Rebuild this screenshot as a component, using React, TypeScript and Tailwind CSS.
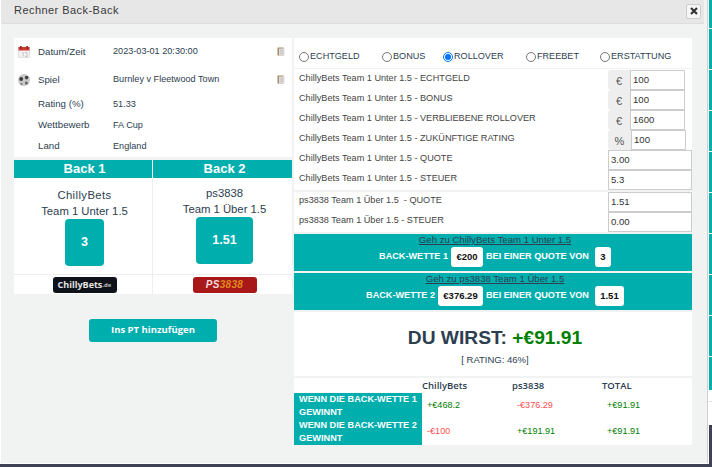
import React from "react";

const Clip = () => (
  <svg width="8" height="9" viewBox="0 0 8 9" className="shrink-0">
    <rect x="0.5" y="0.5" width="6" height="8" fill="#a98a6a" />
    <rect x="2" y="1.5" width="5.5" height="7" fill="#dcdcdc" />
    <path d="M3 3.5h3.5M3 5h3.5M3 6.5h3.5" stroke="#bdbdbd" strokeWidth="0.7" />
  </svg>
);

const Calendar = () => (
  <svg width="12" height="12" viewBox="0 0 12 12">
    <rect x="0.5" y="1" width="11" height="10.5" fill="#f2f2f2" stroke="#cfcfcf" strokeWidth="0.6" />
    <rect x="0.5" y="1" width="11" height="3.5" fill="#cf3a32" />
    <rect x="2" y="0" width="1.6" height="3" fill="#8f2a25" />
    <rect x="8.4" y="0" width="1.6" height="3" fill="#8f2a25" />
    <path d="M4 6.5h1.2v4M7 6.5h2v4H7" stroke="#b5b5b5" strokeWidth="0.7" fill="none" />
  </svg>
);

const Ball = () => (
  <svg width="12" height="12" viewBox="0 0 12 12">
    <circle cx="6" cy="6" r="6" fill="#c9c9c9" />
    <circle cx="3.2" cy="5" r="1.9" fill="#3a3a3a" />
    <circle cx="8.6" cy="3.6" r="1.8" fill="#444" />
    <circle cx="8.4" cy="9" r="1.5" fill="#666" />
    <circle cx="3.4" cy="10" r="1.2" fill="#888" />
  </svg>
);

const InfoRow = ({ label, value, h, extra }: { label: string; value: string; h: string; extra?: React.ReactNode }) => (
  <div className={`flex items-center ${h}`}>
    <div className="w-[24px] shrink-0 pl-[4px]">{extra}</div>
    <div className="w-[75px] shrink-0 text-[9.7px] text-[#2c3e50]">{label}</div>
    <div className="grow text-[9.15px] text-[#2c3e50]">{value}</div>
  </div>
);

const Addon = ({ sym, wide, val }: { sym: string; wide?: boolean; val: string }) => (
  <div className="flex h-[20px] shrink-0">
    <div className={`${wide ? "w-[23px]" : "w-[22px]"} bg-[#eeeeee] rounded-l-[3px] flex items-center justify-center text-[11px] text-[#555] pt-[2px]`}>{sym}</div>
    <div className="w-[55px] border border-[#cccccc] bg-white pl-[2px] text-[9.6px] leading-[17px] text-[#333]">{val}</div>
  </div>
);

const Plain = ({ val }: { val: string }) => (
  <div className="w-[84px] h-[20px] border border-[#cccccc] bg-white pl-[2px] text-[9.6px] leading-[18px] text-[#333] shrink-0">{val}</div>
);

const Row = ({ label, children }: { label: string; children: React.ReactNode }) => (
  <div className="flex h-[20px] justify-between">
    <div className="pl-[5px] text-[9.15px] leading-[17px] text-[#444] whitespace-pre">{label}</div>
    <div className="w-[84px] shrink-0 flex">{children}</div>
  </div>
);

const Radio = ({ label, checked, w }: { label: string; checked?: boolean; w: string }) => (
  <label className={`flex items-center ${w}`}>
    <input type="radio" name="k" defaultChecked={checked} className="w-[10px] h-[10px] m-0 mr-[1px] shrink-0" />
    <span className="text-[9.1px] font-medium text-[#2c3e50]">{label}</span>
  </label>
);

const Chip = ({ children, w }: { children: React.ReactNode; w: string }) => (
  <span className={`${w} h-[20px] bg-white rounded-[3px] flex items-center justify-center text-[9.5px] font-bold text-[#111]`}>{children}</span>
);

const Bet = ({ link, n, stake, stakeW, odd, oddW, oddMl }: { link: string; n: string; stake: string; stakeW: string; odd: string; oddW: string; oddMl: string }) => (
  <div className="h-[37px] bg-[#00aeae] flex flex-col items-center pl-[4px]">
    <div className="text-[9.6px] leading-[12px] h-[13px] underline text-[#2c3e50]">{link}</div>
    <div className="flex items-center h-[20px] text-[9.15px] font-bold text-white">
      <span>BACK-WETTE {n}</span>
      <span className="mx-[3px]"><Chip w={stakeW}>{stake}</Chip></span>
      <span>BEI EINER QUOTE VON</span>
      <span className={oddMl}><Chip w={oddW}>{odd}</Chip></span>
    </div>
  </div>
);

export default function App() {
  return (
    <div className="w-[712px] h-[467px] bg-[#3f4254] flex overflow-hidden font-['Liberation_Sans',Arial,sans-serif]">
      <div className="w-[709px] h-[464px] shrink-0 bg-white pr-[1px] pb-[1px]">
        <div className="h-full ml-[1px] flex flex-col bg-[#f1f3f3] border-r border-[#cfcfcf]">
          <div className="h-[24px] shrink-0 mr-[3px] bg-[#e7e7e7] border-b border-[#dddddd] rounded-bl-[2px] flex items-center justify-between pl-[13px] pr-[3px]">
            <div className="text-[11px] font-medium tracking-[0.45px] text-[#3a3a3a] -mt-[3px]">Rechner Back-Back</div>
            <div className="w-[15px] h-[15px] -mt-[1px] bg-[#f5f5f5] border border-[#cccccc] rounded-[2px] flex items-center justify-center">
              <svg width="8" height="8" viewBox="0 0 8 8"><path d="M1 1l6 6M7 1l-6 6" stroke="#333" strokeWidth="2.2" /></svg>
            </div>
          </div>
          <div className="flex pl-[13px] pt-[14px]">
            <div className="w-[278px] shrink-0">
              <div className="h-[119px] bg-white">
                <InfoRow h="h-[28px]" label="Datum/Zeit" value="2023-03-01 20:30:00" extra={<Calendar />} />
                <div className="h-0 relative"><div className="absolute right-[7px] -top-[19px]"><Clip /></div></div>
                <InfoRow h="h-[28px]" label="Spiel" value="Burnley v Fleetwood Town" extra={<Ball />} />
                <div className="h-0 relative"><div className="absolute right-[7px] -top-[19px]"><Clip /></div></div>
                <InfoRow h="h-[21px]" label="Rating (%)" value="51.33" />
                <InfoRow h="h-[21px]" label="Wettbewerb" value="FA Cup" />
                <InfoRow h="h-[21px]" label="Land" value="England" />
              </div>
              <div className="mt-[3px] bg-white">
                <div className="flex h-[18px] bg-[#00aeae] text-white font-bold text-[13px] leading-[17px] text-center">
                  <div className="w-[139px] border-r border-white pl-[3px]">Back 1</div>
                  <div className="grow pl-[4px]">Back 2</div>
                </div>
                <div className="flex h-[97px] border-b border-[#eeeeee] text-[#2c3e50] text-[11.3px] text-center">
                  <div className="w-[139px] border-r border-[#eeeeee] flex flex-col items-center pt-[9px] pl-[3px]">
                    <div className="leading-[16px] tracking-[0.4px]">ChillyBets</div>
                    <div className="leading-[16px]">Team 1 Unter 1.5</div>
                    <div className="w-[39px] h-[47px] bg-[#00aeae] rounded-[4px] flex items-center justify-center text-white font-bold text-[12.5px]">3</div>
                  </div>
                  <div className="grow flex flex-col items-center pt-[7px] pl-[4px]">
                    <div className="leading-[16px]">ps3838</div>
                    <div className="leading-[16px]">Team 1 Über 1.5</div>
                    <div className="w-[57px] h-[47px] bg-[#00aeae] rounded-[4px] flex items-center justify-center text-white font-bold text-[12.5px]">1.51</div>
                  </div>
                </div>
                <div className="flex h-[19px] items-center">
                  <div className="w-[139px] h-full border-r border-[#eeeeee] flex items-center justify-center pl-[3px]">
                    <div className="w-[64px] h-[16px] bg-[#10121a] rounded-[3px] flex items-center justify-center text-[#e4e4e4] text-[9px] font-bold font-['Open_Sans',sans-serif]">
                      ChillyBets<span className="text-[6px] text-[#bbb] mt-[1px]">.de</span>
                    </div>
                  </div>
                  <div className="grow flex items-center justify-center pl-[4px]">
                    <div className="w-[64px] h-[16px] bg-[#a81818] rounded-[3px] flex items-center justify-center text-[10px] font-bold italic tracking-[0.3px]">
                      <span className="text-[#f3d9d9]">PS</span><span className="text-[#e08a1e]">3838</span>
                    </div>
                  </div>
                </div>
              </div>
              <div className="flex justify-center mt-[25px]">
                <div className="w-[128px] h-[23px] bg-[#00aeae] rounded-[3px] flex items-center justify-center text-white text-[9.5px] font-bold font-['Open_Sans',sans-serif]">Ins PT hinzufügen</div>
              </div>
            </div>
            <div className="w-[398px] ml-[2px] shrink-0">
              <div className="h-[30px] bg-white flex items-end pl-[5px] pb-[4px]">
                <Radio label="ECHTGELD" w="w-[83px]" />
                <Radio label="BONUS" w="w-[61px]" />
                <Radio label="ROLLOVER" checked w="w-[83px]" />
                <Radio label="FREEBET" w="w-[74px]" />
                <Radio label="ERSTATTUNG" w="w-[90px]" />
              </div>
              <div className="mt-[1px] h-[121px] bg-white pt-[1px]">
                <Row label="ChillyBets Team 1 Unter 1.5 - ECHTGELD"><Addon sym="€" val="100" /></Row>
                <Row label="ChillyBets Team 1 Unter 1.5 - BONUS"><Addon sym="€" val="100" /></Row>
                <Row label="ChillyBets Team 1 Unter 1.5 - VERBLIEBENE ROLLOVER"><Addon sym="€" val="1600" /></Row>
                <Row label="ChillyBets Team 1 Unter 1.5 - ZUKÜNFTIGE RATING"><Addon sym="%" wide val="100" /></Row>
                <Row label="ChillyBets Team 1 Unter 1.5 - QUOTE"><Plain val="3.00" /></Row>
                <Row label="ChillyBets Team 1 Unter 1.5 - STEUER"><Plain val="5.3" /></Row>
              </div>
              <div className="mt-[2px] h-[40px] bg-white">
                <Row label="ps3838 Team 1 Über 1.5  - QUOTE"><Plain val="1.51" /></Row>
                <Row label="ps3838 Team 1 Über 1.5 - STEUER"><Plain val="0.00" /></Row>
              </div>
              <div className="mt-[2px]">
                <Bet link="Geh zu ChillyBets Team 1 Unter 1.5" n="1" stake="€200" stakeW="w-[32px]" odd="3" oddW="w-[16px]" oddMl="ml-[6px]" />
              </div>
              <div className="mt-[2px]">
                <Bet link="Geh zu ps3838 Team 1 Über 1.5" n="2" stake="€376.29" stakeW="w-[45px]" odd="1.51" oddW="w-[29px]" oddMl="ml-[6px]" />
              </div>
              <div className="mt-[2px] h-[64px] bg-white flex flex-col items-center pl-[4px]">
                <div className="mt-[14px] text-[19.2px] leading-[23px] font-bold text-[#2c3e50]">DU WIRST: <span className="text-[#008000]">+€91.91</span></div>
                <div className="mt-[4px] text-[9.5px] text-[#2c3e50]">[ RATING: 46%]</div>
              </div>
              <div className="mt-[2px] h-[67px] bg-white">
                <div className="flex h-[15px] items-center pt-[1px] text-[9.5px] font-semibold text-[#2c3e50] font-['Open_Sans',sans-serif]">
                  <div className="w-[128px]" />
                  <div className="w-[90px]">ChillyBets</div>
                  <div className="w-[90px]">ps3838</div>
                  <div>TOTAL</div>
                </div>
                <div className="flex h-[26px] items-center">
                  <div className="w-[128px] h-full bg-[#00aeae] text-white font-bold text-[9.2px] leading-[13px] pl-[5px]">WENN DIE BACK-WETTE 1 GEWINNT</div>
                  <div className="w-[90px] pl-[5px] text-[9.1px] text-[#008000]">+€468.2</div>
                  <div className="w-[90px] pl-[5px] text-[9.1px] text-[#ff4d4d]">-€376.29</div>
                  <div className="pl-[5px] text-[9.1px] text-[#008000]">+€91.91</div>
                </div>
                <div className="flex h-[26px] items-center">
                  <div className="w-[128px] h-full bg-[#00aeae] text-white font-bold text-[9.2px] leading-[13px] pl-[5px]">WENN DIE BACK-WETTE 2 GEWINNT</div>
                  <div className="w-[90px] pl-[5px] text-[9.1px] text-[#ff4d4d]">-€100</div>
                  <div className="w-[90px] pl-[5px] text-[9.1px] text-[#008000]">+€191.91</div>
                  <div className="pl-[5px] text-[9.1px] text-[#008000]">+€91.91</div>
                </div>
              </div>
            </div>
          </div>
        </div>
      </div>
      <div className="w-[3px] h-[425px] shrink-0 bg-white flex flex-col">
        <div className="h-[28px] mb-[1px] bg-[#00aeae]" />
        {[0, 1, 2, 3, 4, 5, 6, 7].map((i) => (
          <div key={i} className="h-[40px] mb-[1px] bg-[#00aeae]" />
        ))}
        <div className="h-[33px] bg-[#00aeae]" />
        <div className="h-[12px] border-b border-[#dddddd]" />
      </div>
    </div>
  );
}
